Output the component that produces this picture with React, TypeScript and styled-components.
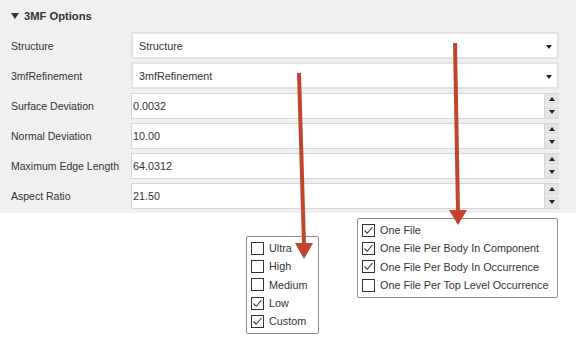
import React from "react";
import styled, { createGlobalStyle } from "styled-components";

const Global = createGlobalStyle`
  html, body { margin: 0; padding: 0; background: #ffffff; }
  body { font-family: "Liberation Sans", Arial, sans-serif; font-size: 11px; color: #333; }
`;

const Page = styled.div`
  position: relative;
  width: 576px;
  height: 339px;
  overflow: hidden;
  background: #fff;
`;

const Panel = styled.section`
  background: #f0f0f0;
  padding: 0 17px 4px 11px;
  height: 213px;
  box-sizing: border-box;
`;

const Header = styled.div`
  display: flex;
  align-items: center;
  gap: 5px;
  height: 32px;
  font-weight: bold;
  font-size: 11.2px;
  color: #333;
`;

const Tri = styled.span`
  width: 0;
  height: 0;
  border-left: 4px solid transparent;
  border-right: 4px solid transparent;
  border-top: 6px solid #333;
`;

const Rows = styled.div`
  display: flex;
  flex-direction: column;
  gap: 3px;
`;

const Row = styled.div`
  display: grid;
  grid-template-columns: 120px 1fr;
  align-items: center;
  height: 27px;
`;

const Label = styled.span`
  color: #333;
  font-size: 10.5px;
`;

const Select = styled.div`
  height: 27px;
  box-sizing: border-box;
  border: 2px solid #e2e2e2;
  background: #fff;
  display: flex;
  align-items: center;
  justify-content: space-between;
  padding: 0 5px 0 6px;
  font-size: 10.8px;
`;

const Caret = styled.span`
  width: 0;
  height: 0;
  border-left: 3.5px solid transparent;
  border-right: 3.5px solid transparent;
  border-top: 4px solid #222;
  position: relative;
  top: 1px;
`;

const Spin = styled.div`
  height: 26px;
  box-sizing: border-box;
  display: flex;
  background: #fff;
  border: 1px solid #d6d6d6;
  border-right: none;
  font-size: 10.8px;
`;

const SpinText = styled.div`
  flex: 1;
  display: flex;
  align-items: center;
  padding-left: 1px;
  border-right: 1px solid #d6d6d6;
`;

const SpinButtons = styled.div`
  width: 14px;
  display: flex;
  flex-direction: column;
  gap: 1px;
  background: #f0f0f0;
`;

const SpinBtn = styled.div`
  flex: 1;
  background: #e4e4e4;
  display: flex;
  align-items: center;
  justify-content: center;
`;

const Up = styled.span<{ $down?: boolean }>`
  width: 0;
  height: 0;
  border-left: 3px solid transparent;
  border-right: 3px solid transparent;
  ${(p) => (p.$down ? "border-top: 4px solid #222;" : "border-bottom: 4px solid #222;")}
`;

const Popup = styled.div<{ $left: number; $top: number; $width: number }>`
  position: absolute;
  left: ${(p) => p.$left}px;
  top: ${(p) => p.$top}px;
  width: ${(p) => p.$width}px;
  box-sizing: border-box;
  background: #fff;
  border: 1px solid #8c8c8c;
  border-radius: 2px;
  padding: 2px 4px 3px 4px;
  display: flex;
  flex-direction: column;
`;

const Item = styled.div`
  display: flex;
  align-items: center;
  gap: 5px;
  height: 18.3px;
  font-size: 10.8px;
  color: #333;
`;

const Box = styled.span`
  width: 13px;
  height: 13px;
  box-sizing: border-box;
  border: 1px solid #333;
  background: #fff;
  display: flex;
  align-items: center;
  justify-content: center;
`;

const Arrows = styled.svg`
  position: absolute;
  left: 0;
  top: 0;
  pointer-events: none;
`;

const Check = ({ on }: { on: boolean }) => (
  <Box>
    {on && (
      <svg width="11" height="11" viewBox="0 0 11 11">
        <path d="M1.5 5.5 L4.2 8.3 L9.5 2" fill="none" stroke="#333" strokeWidth="1.1" />
      </svg>
    )}
  </Box>
);

const selects = [
  ["Structure", "Structure"],
  ["3mfRefinement", "3mfRefinement"],
];
const spins = [
  ["Surface Deviation", "0.0032"],
  ["Normal Deviation", "10.00"],
  ["Maximum Edge Length", "64.0312"],
  ["Aspect Ratio", "21.50"],
];

const levels: [string, boolean][] = [
  ["Ultra", false],
  ["High", false],
  ["Medium", false],
  ["Low", true],
  ["Custom", true],
];
const files: [string, boolean][] = [
  ["One File", true],
  ["One File Per Body In Component", true],
  ["One File Per Body In Occurrence", true],
  ["One File Per Top Level Occurrence", false],
];

export default function App() {
  return (
    <Page>
      <Global />
      <Panel>
        <Header>
          <Tri />
          <span>3MF Options</span>
        </Header>
        <Rows>
          {selects.map(([l, v]) => (
            <Row key={l}>
              <Label>{l}</Label>
              <Select>
                <span>{v}</span>
                <Caret />
              </Select>
            </Row>
          ))}
          {spins.map(([l, v]) => (
            <Row key={l}>
              <Label>{l}</Label>
              <Spin>
                <SpinText>{v}</SpinText>
                <SpinButtons>
                  <SpinBtn>
                    <Up />
                  </SpinBtn>
                  <SpinBtn>
                    <Up $down />
                  </SpinBtn>
                </SpinButtons>
              </Spin>
            </Row>
          ))}
        </Rows>
      </Panel>

      <Popup $left={246} $top={236} $width={73}>
        {levels.map(([t, on]) => (
          <Item key={t}>
            <Check on={on} />
            <span>{t}</span>
          </Item>
        ))}
      </Popup>

      <Popup $left={357} $top={218} $width={201}>
        {files.map(([t, on]) => (
          <Item key={t}>
            <Check on={on} />
            <span>{t}</span>
          </Item>
        ))}
      </Popup>

      <Arrows width="576" height="339">
        <line x1="455" y1="43" x2="458" y2="212" stroke="#c1442c" strokeWidth="4" />
        <polygon points="449,210 467,210 458,225" fill="#c1442c" />
        <line x1="299" y1="73" x2="304" y2="245" stroke="#c1442c" strokeWidth="4" />
        <polygon points="295,243 313,243 304,259" fill="#c1442c" />
      </Arrows>
    </Page>
  );
}
